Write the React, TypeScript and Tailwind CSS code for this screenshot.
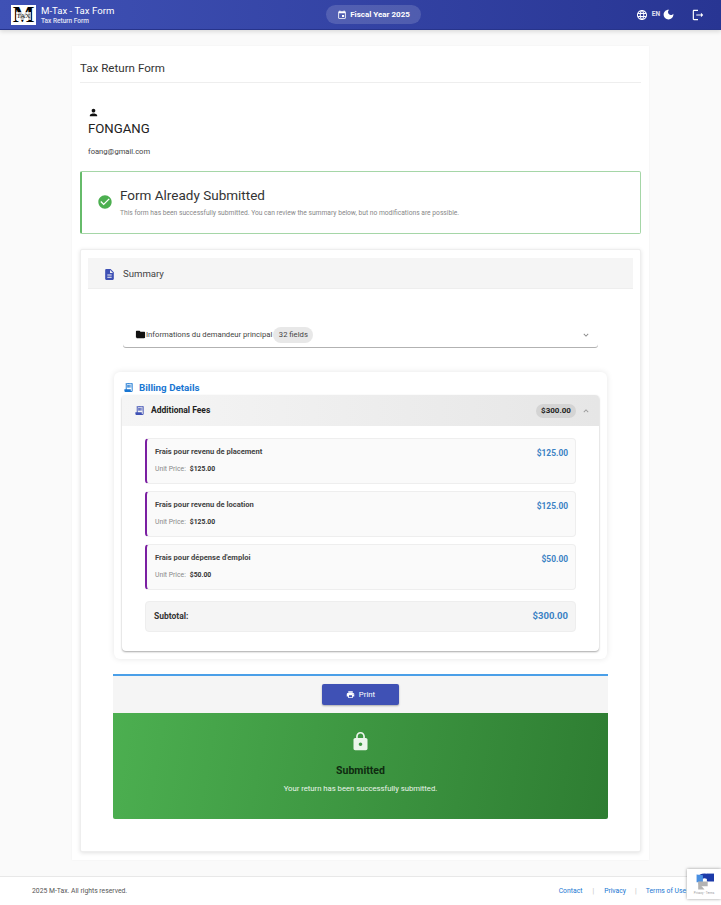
import { ReactNode } from "react";

type IconProps = { d: string; className?: string };

function Icon({ d, className }: IconProps) {
  return (
    <svg viewBox="0 0 24 24" fill="currentColor" className={className}>
      <path d={d} />
    </svg>
  );
}

const ICONS = {
  event: "M17 12h-5v5h5v-5zM16 1v2H8V1H6v2H5c-1.11 0-1.99.9-1.99 2L3 19c0 1.1.89 2 2 2h14c1.1 0 2-.9 2-2V5c0-1.1-.9-2-2-2h-1V1h-2zm3 18H5V8h14v11z",
  globe: "M11.99 2C6.47 2 2 6.48 2 12s4.47 10 9.99 10C17.52 22 22 17.52 22 12S17.52 2 11.99 2zm6.93 6h-2.95c-.32-1.25-.78-2.45-1.38-3.56 1.84.63 3.37 1.91 4.33 3.56zM12 4.04c.83 1.2 1.48 2.53 1.91 3.96h-3.82c.43-1.43 1.08-2.76 1.91-3.96zM4.26 14C4.1 13.36 4 12.69 4 12s.1-1.36.26-2h3.38c-.08.66-.14 1.32-.14 2s.06 1.34.14 2H4.26zm.82 2h2.95c.32 1.25.78 2.45 1.38 3.56-1.84-.63-3.37-1.9-4.33-3.56zm2.95-8H5.08c.96-1.66 2.49-2.93 4.33-3.56C8.81 5.55 8.35 6.75 8.03 8zM12 19.96c-.83-1.2-1.48-2.53-1.91-3.96h3.82c-.43 1.43-1.08 2.76-1.91 3.96zM14.34 14H9.66c-.09-.66-.16-1.32-.16-2s.07-1.35.16-2h4.68c.09.65.16 1.32.16 2s-.07 1.34-.16 2zm.25 5.56c.6-1.11 1.06-2.31 1.38-3.56h2.95c-.96 1.65-2.49 2.93-4.33 3.56zM16.36 14c.08-.66.14-1.32.14-2s-.06-1.34-.14-2h3.38c.16.64.26 1.31.26 2s-.1 1.36-.26 2h-3.38z",
  moon: "M12 3c-4.97 0-9 4.03-9 9s4.03 9 9 9 9-4.03 9-9c0-.46-.04-.92-.1-1.36-.98 1.37-2.58 2.26-4.4 2.26-2.98 0-5.4-2.42-5.4-5.4 0-1.81.89-3.42 2.26-4.4-.44-.06-.9-.1-1.36-.1z",
  logout: "M5 5h7V3H5c-1.1 0-2 .9-2 2v14c0 1.1.9 2 2 2h7v-2H5V5zm16 7-4-4v3H9v2h8v3l4-4z",
  person: "M12 12c2.21 0 4-1.79 4-4s-1.79-4-4-4-4 1.79-4 4 1.79 4 4 4zm0 2c-2.67 0-8 1.34-8 4v2h16v-2c0-2.66-5.33-4-8-4z",
  check: "M12 2C6.48 2 2 6.48 2 12s4.48 10 10 10 10-4.48 10-10S17.52 2 12 2zm-2 15-5-5 1.41-1.41L10 14.17l7.59-7.59L19 8l-9 9z",
  doc: "M14 2H6c-1.1 0-1.99.9-1.99 2L4 20c0 1.1.89 2 1.99 2H18c1.1 0 2-.9 2-2V8l-6-6zm2 16H8v-2h8v2zm0-4H8v-2h8v2zm-3-5V3.5L18.5 9H13z",
  folder: "M10 4H4c-1.1 0-1.99.9-1.99 2L2 18c0 1.1.9 2 2 2h16c1.1 0 2-.9 2-2V8c0-1.1-.9-2-2-2h-8l-2-2z",
  receipt: "M19.5 3.5 18 2l-1.5 1.5L15 2l-1.5 1.5L12 2l-1.5 1.5L9 2 7.5 3.5 6 2v14H3v3c0 1.66 1.34 3 3 3h12c1.66 0 3-1.34 3-3V2l-1.5 1.5zM19 19c0 .55-.45 1-1 1s-1-.45-1-1v-3H8V5h11v14zM9 7h6v2H9zm7 0h2v2h-2zm-7 3h6v2H9zm7 0h2v2h-2z",
  chevronDown: "M16.59 8.59 12 13.17 7.41 8.59 6 10l6 6 6-6z",
  chevronUp: "m12 8-6 6 1.41 1.41L12 10.83l4.59 4.58L18 14z",
  print: "M19 8H5c-1.66 0-3 1.34-3 3v6h4v4h12v-4h4v-6c0-1.66-1.34-3-3-3zm-3 11H8v-5h8v5zm3-7c-.55 0-1-.45-1-1s.45-1 1-1 1 .45 1 1-.45 1-1 1zm-1-9H6v4h12V3z",
  lock: "M18 8h-1V6c0-2.76-2.24-5-5-5S7 3.24 7 6v2H6c-1.1 0-2 .9-2 2v10c0 1.1.9 2 2 2h12c1.1 0 2-.9 2-2V10c0-1.1-.9-2-2-2zm-6 9c-1.1 0-2-.9-2-2s.9-2 2-2 2 .9 2 2-.9 2-2 2zm3.1-9H8.9V6c0-1.71 1.39-3.1 3.1-3.1 1.71 0 3.1 1.39 3.1 3.1v2z",
};

function Logo() {
  return (
    <div className="relative flex h-[20px] w-[25px] shrink-0 items-center justify-center bg-white">
      <span className="font-['Liberation_Serif',serif] text-[23px] leading-[20px] font-bold text-black">M</span>
      <span className="absolute left-[5px] top-[7px] w-[15px] bg-white/75 text-center font-['Liberation_Serif',serif] text-[7px] leading-[8px] text-[#222]">TAX</span>
    </div>
  );
}

function Header() {
  return (
    <header className="relative flex h-[30px] items-center border-b border-[#27348b] bg-[linear-gradient(90deg,#3f51b5,#283593)] pl-[11px] pr-[16px] text-white shadow-[0_2px_4px_rgba(0,0,0,0.12)]">
      <div className="flex w-[315px] items-center gap-[5px]">
        <Logo />
        <div>
          <div className="text-[9.6px] leading-[12px]">M-Tax - Tax Form</div>
          <div className="text-[6.5px] leading-[8px] font-medium text-white/85">Tax Return Form</div>
        </div>
      </div>
      <div className="flex h-[19px] w-[95px] items-center justify-center gap-[3px] rounded-full bg-white/15 text-[8px] font-bold">
        <Icon d={ICONS.event} className="size-[10px]" />
        <span>Fiscal Year 2025</span>
      </div>
      <div className="flex flex-1 items-center justify-end">
        <Icon d={ICONS.globe} className="size-[12px]" />
        <span className="ml-[4px] text-[6.5px] font-bold text-white/85">EN</span>
        <Icon d={ICONS.moon} className="ml-[2px] size-[13px]" />
        <Icon d={ICONS.logout} className="ml-[16px] size-[14px]" />
      </div>
    </header>
  );
}

function Chip({ children, className }: { children: ReactNode; className: string }) {
  return <span className={`flex items-center justify-center rounded-full ${className}`}>{children}</span>;
}

function FeeItem({ name, price }: { name: string; price: string }) {
  return (
    <div className="flex h-[46px] justify-between rounded-[4px] border border-l-2 border-[#eeeeee] border-l-[#7b1fa2] bg-[#fafafa] pl-[8px] pr-[7px] pt-[8px]">
      <div>
        <div className="text-[7.6px] leading-[10px] font-bold text-[#444]">{name}</div>
        <div className="mt-[7px] flex gap-[4px] text-[6.8px] leading-[10px]">
          <span className="text-[#888]">Unit Price:</span>
          <span className="font-bold text-[#333]">{price}</span>
        </div>
      </div>
      <span className="text-[8.4px] leading-[12px] font-bold text-[#3b82c4]">{price}</span>
    </div>
  );
}

function Billing() {
  return (
    <div className="mx-[26px] mt-[25px] rounded-[6px] bg-white px-[8px] pb-[8px] shadow-[0_0_6px_rgba(0,0,0,0.1)]">
      <div className="flex h-[23px] items-end gap-[5px] px-[1px] pb-[1px] text-[#1976d2]">
        <Icon d={ICONS.receipt} className="mb-[1px] size-[11px]" />
        <span className="text-[9.8px] leading-[12px] font-bold">Billing Details</span>
      </div>
      <div className="rounded-[4px] bg-white shadow-[0_1px_2px_rgba(0,0,0,0.35)]">
        <div className="flex h-[31px] items-center rounded-t-[4px] bg-[linear-gradient(90deg,#f5f5f5,#e6e6e6)] pl-[12px] pr-[8px]">
          <Icon d={ICONS.receipt} className="size-[11px] text-[#3f51b5]" />
          <span className="ml-[6px] flex-1 text-[8.5px] font-bold text-[#222]">Additional Fees</span>
          <Chip className="h-[14px] w-[40px] bg-[#d4d4d4] text-[8px] font-bold text-[#222]">$300.00</Chip>
          <Icon d={ICONS.chevronUp} className="ml-[5px] size-[10px] text-[#999]" />
        </div>
        <div className="flex flex-col gap-[7px] pl-[23px] pr-[23px] pt-[12px] pb-[19px]">
          <FeeItem name="Frais pour revenu de placement" price="$125.00" />
          <FeeItem name="Frais pour revenu de location" price="$125.00" />
          <FeeItem name="Frais pour dépense d'emploi" price="$50.00" />
          <div className="mt-[4px] flex h-[31px] items-center justify-between rounded-[4px] border border-[#eeeeee] bg-[#f5f5f5] pl-[8px] pr-[7px]">
            <span className="text-[8.5px] font-bold text-[#333]">Subtotal:</span>
            <span className="text-[9.5px] font-bold text-[#3b82c4]">$300.00</span>
          </div>
        </div>
      </div>
    </div>
  );
}

function Summary() {
  return (
    <section className="mt-[15px] rounded-[2px] border border-[#eeeeee] bg-white px-[7px] pt-[8px] pb-[32px] shadow-[0_1px_4px_rgba(0,0,0,0.12)]">
      <div className="flex h-[31px] items-center gap-[7px] border-b border-[#eeeeee] bg-[#f5f5f5] pl-[15px] pt-[2px]">
        <Icon d={ICONS.doc} className="size-[13px] text-[#3f51b5]" />
        <span className="text-[9.6px] text-[#444]">Summary</span>
      </div>
      <div className="mx-[35px] mt-[33px] flex h-[25px] items-center rounded-b-[3px] pl-[12px] pr-[7px] shadow-[0_1px_0_rgba(0,0,0,0.3)]">
        <Icon d={ICONS.folder} className="size-[11px] text-[#111]" />
        <span className="text-[7.7px] text-[#444]">Informations du demandeur principal</span>
        <Chip className="ml-[1px] h-[16px] w-[40px] bg-[#e8e8e8] text-[7.7px] text-[#444]">32 fields</Chip>
        <Icon d={ICONS.chevronDown} className="ml-auto size-[10px] text-[#888]" />
      </div>
      <Billing />
      <div className="mx-[25px] mt-[15px] flex h-[39px] items-center justify-center border-t-2 border-t-[#4a9fe8] bg-[#f5f5f5]">
        <button className="flex h-[21px] w-[77px] items-center justify-center gap-[4px] rounded-[2px] bg-[#3f51b5] text-[7.8px] text-white shadow-[0_1px_2px_rgba(0,0,0,0.3)]">
          <Icon d={ICONS.print} className="size-[9px]" />
          Print
        </button>
      </div>
      <div className="mx-[25px] flex h-[106px] flex-col items-center rounded-b-[2px] bg-[linear-gradient(100deg,#4caf50,#2e7d32)] pt-[18px]">
        <Icon d={ICONS.lock} className="size-[21px] text-white/90" />
        <div className="mt-[12px] text-[10.5px] leading-[14px] font-bold text-[#0f2b10]">Submitted</div>
        <div className="mt-[5px] text-[7.7px] leading-[12px] text-white/90">Your return has been successfully submitted.</div>
      </div>
    </section>
  );
}

function Footer() {
  return (
    <footer className="mt-[16px] flex h-[29px] items-center justify-between border-t border-[#e8e8e8] bg-white pl-[32px] pr-[35px] text-[6.8px] text-[#555]">
      <span>2025 M-Tax. All rights reserved.</span>
      <div className="flex items-center text-[#1976d2]">
        <span>Contact</span>
        <span className="mx-[10px] text-[#bbb]">|</span>
        <span>Privacy</span>
        <span className="mx-[9px] text-[#bbb]">|</span>
        <span>Terms of Use</span>
      </div>
    </footer>
  );
}

function RecaptchaBadge() {
  return (
    <div className="absolute right-0 top-[869px] flex h-[30px] w-[34px] flex-col items-center bg-white pt-[3px] shadow-[0_0_3px_rgba(0,0,0,0.4)]">
      <svg viewBox="0 0 24 24" className="size-[19px]" fill="none">
        <path d="M5 9a8 8 0 0 1 14 0" stroke="#1c3aa9" strokeWidth="6" />
        <path d="M15 2h9v10h-9z" fill="#1c3aa9" />
        <path d="M2 3l8 1v9H2z" fill="#4a90e2" />
        <path d="M10 12h6v6H9a5 5 0 0 1-5-5v-1z" fill="#b3b3b3" />
        <path d="M4 13l8 9H4z" fill="#b3b3b3" />
      </svg>
      <span className="text-[3px] leading-[4px] text-[#999]">Privacy - Terms</span>
    </div>
  );
}

export default function App() {
  return (
    <div className="relative h-[905px] w-[721px] overflow-hidden bg-[#fafafa] font-['Roboto',sans-serif]">
      <Header />
      <main className="mx-[72px] mt-[16px] h-[814px] bg-white px-[8px] pt-[8px] shadow-[0_0_2px_rgba(0,0,0,0.04)]">
        <div className="flex h-[29px] items-center border-b border-[#eeeeee] pt-[2px] text-[11.6px] text-[#333]">Tax Return Form</div>
        <div className="mt-[24px] pl-[8px]">
          <Icon d={ICONS.person} className="size-[11px] text-[#111]" />
          <div className="mt-[2px] text-[13.2px] leading-[18px] text-[#222]">FONGANG</div>
          <div className="mt-[9px] text-[7.6px] leading-[10px] text-[#444]">foang@gmail.com</div>
        </div>
        <div className="mt-[14px] flex h-[63px] items-center rounded-[2px] border border-l-2 border-[#a5d6a7] border-l-[#66bb6a] pb-[2px] pl-[15px]">
          <Icon d={ICONS.check} className="size-[16px] text-[#4caf50]" />
          <div className="ml-[7px]">
            <div className="text-[13.5px] leading-[18px] text-[#333]">Form Already Submitted</div>
            <div className="mt-[5px] text-[6.7px] leading-[9px] text-[#888]">
              This form has been successfully submitted. You can review the summary below, but no modifications are possible.
            </div>
          </div>
        </div>
        <Summary />
      </main>
      <Footer />
      <RecaptchaBadge />
    </div>
  );
}
